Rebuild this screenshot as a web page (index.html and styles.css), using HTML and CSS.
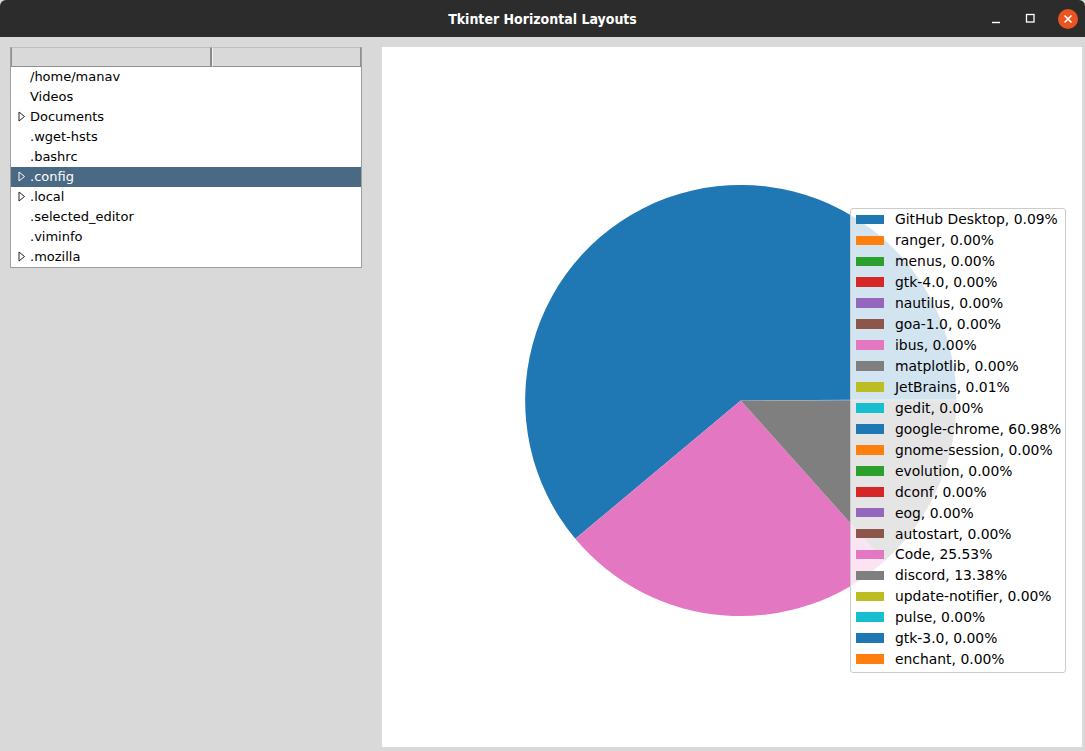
FILE: index.html
```html
<!DOCTYPE html>
<html>
<head>
<meta charset="utf-8">
<link rel="stylesheet" href="styles.css">
</head>
<body>
<div class="window">
  <header class="titlebar">
    <div class="spacer"></div>
    <div class="title">Tkinter Horizontal Layouts</div>
    <div class="controls">
      <span class="ctl ctl-min"><svg width="12" height="12" viewBox="0 0 12 12"><line x1="2" y1="9.5" x2="10" y2="9.5" stroke="#fff" stroke-width="1.4"/></svg></span>
      <span class="ctl ctl-max"><svg width="12" height="12" viewBox="0 0 12 12"><rect x="2.5" y="1.5" width="7.5" height="7.5" fill="none" stroke="#fff" stroke-width="1.3"/></svg></span>
      <span class="ctl ctl-close"><svg width="20" height="20" viewBox="0 0 20 20"><circle cx="10" cy="10" r="10" fill="#e95420"/><path d="M6.5 6.5 L13.5 13.5 M13.5 6.5 L6.5 13.5" stroke="#fff" stroke-width="1.6"/></svg></span>
    </div>
  </header>
  <main class="content">
    <section class="tree">
      <div class="tree-head">
        <div class="head-cell head-c1"></div>
        <div class="head-cell head-c2"></div>
      </div>
      <ul class="tree-rows">
        <li class="row"><span class="arrow"></span><span class="label">/home/manav</span></li>
        <li class="row"><span class="arrow"></span><span class="label">Videos</span></li>
        <li class="row"><span class="arrow"><svg width="8" height="11" viewBox="0 0 8 11"><path d="M1 1 L6.5 5.5 L1 10 Z" fill="none" stroke="#222" stroke-width="1"/></svg></span><span class="label">Documents</span></li>
        <li class="row"><span class="arrow"></span><span class="label">.wget-hsts</span></li>
        <li class="row"><span class="arrow"></span><span class="label">.bashrc</span></li>
        <li class="row selected"><span class="arrow"><svg width="8" height="11" viewBox="0 0 8 11"><path d="M1 1 L6.5 5.5 L1 10 Z" fill="none" stroke="#fff" stroke-width="1"/></svg></span><span class="label">.config</span></li>
        <li class="row"><span class="arrow"><svg width="8" height="11" viewBox="0 0 8 11"><path d="M1 1 L6.5 5.5 L1 10 Z" fill="none" stroke="#222" stroke-width="1"/></svg></span><span class="label">.local</span></li>
        <li class="row"><span class="arrow"></span><span class="label">.selected_editor</span></li>
        <li class="row"><span class="arrow"></span><span class="label">.viminfo</span></li>
        <li class="row"><span class="arrow"><svg width="8" height="11" viewBox="0 0 8 11"><path d="M1 1 L6.5 5.5 L1 10 Z" fill="none" stroke="#222" stroke-width="1"/></svg></span><span class="label">.mozilla</span></li>
      </ul>
    </section>
    <section class="canvas">
      <svg class="pie" width="700" height="700" viewBox="0 0 700 700">
        <path d="M358.75 353.5 L574.35 353.5 A215.6 215.6 0 0 0 574.34 352.28 Z" fill="#1f77b4"/>
        <path d="M358.75 353.5 L574.34 352.28 A215.6 215.6 0 0 0 574.35 352.15 Z" fill="#bcbd22"/>
        <path d="M358.75 353.5 L574.35 352.15 A215.6 215.6 0 1 0 193.30 491.77 Z" fill="#1f77b4"/>
        <path d="M358.75 353.5 L193.30 491.77 A215.6 215.6 0 0 0 502.45 514.23 Z" fill="#e377c2"/>
        <path d="M358.75 353.5 L502.45 514.23 A215.6 215.6 0 0 0 574.35 353.5 Z" fill="#7f7f7f"/>
      </svg>
      <ul class="legend">
        <li><i style="background:#1f77b4"></i>GitHub Desktop, 0.09%</li>
        <li><i style="background:#ff7f0e"></i>ranger, 0.00%</li>
        <li><i style="background:#2ca02c"></i>menus, 0.00%</li>
        <li><i style="background:#d62728"></i>gtk-4.0, 0.00%</li>
        <li><i style="background:#9467bd"></i>nautilus, 0.00%</li>
        <li><i style="background:#8c564b"></i>goa-1.0, 0.00%</li>
        <li><i style="background:#e377c2"></i>ibus, 0.00%</li>
        <li><i style="background:#7f7f7f"></i>matplotlib, 0.00%</li>
        <li><i style="background:#bcbd22"></i>JetBrains, 0.01%</li>
        <li><i style="background:#17becf"></i>gedit, 0.00%</li>
        <li><i style="background:#1f77b4"></i>google-chrome, 60.98%</li>
        <li><i style="background:#ff7f0e"></i>gnome-session, 0.00%</li>
        <li><i style="background:#2ca02c"></i>evolution, 0.00%</li>
        <li><i style="background:#d62728"></i>dconf, 0.00%</li>
        <li><i style="background:#9467bd"></i>eog, 0.00%</li>
        <li><i style="background:#8c564b"></i>autostart, 0.00%</li>
        <li><i style="background:#e377c2"></i>Code, 25.53%</li>
        <li><i style="background:#7f7f7f"></i>discord, 13.38%</li>
        <li><i style="background:#bcbd22"></i>update-notifier, 0.00%</li>
        <li><i style="background:#17becf"></i>pulse, 0.00%</li>
        <li><i style="background:#1f77b4"></i>gtk-3.0, 0.00%</li>
        <li><i style="background:#ff7f0e"></i>enchant, 0.00%</li>
      </ul>
    </section>
  </main>
</div>
</body>
</html>
```

FILE: styles.css
```css
* { box-sizing: border-box; }
html, body { margin: 0; padding: 0; }
body {
  width: 1085px;
  height: 751px;
  overflow: hidden;
  background: #d9d9d9;
  font-family: "DejaVu Sans", sans-serif;
}
.window { width: 1085px; height: 751px; display: flex; flex-direction: column; }

.titlebar {
  height: 37px;
  flex: none;
  background: #2c2c2c;
  display: grid;
  grid-template-columns: 1fr auto 1fr;
  align-items: center;
  border-radius: 6px 6px 0 0;
}
.title {
  color: #ffffff;
  font-family: "DejaVu Sans Condensed", "DejaVu Sans", sans-serif;
  font-weight: bold;
  font-size: 14px;
  letter-spacing: 0;
}
.controls {
  display: flex;
  justify-content: flex-end;
  align-items: center;
  gap: 0;
  padding-right: 7px;
}
.ctl { display: flex; align-items: center; justify-content: center; }
.ctl-min { width: 12px; margin-right: 22px; }
.ctl-max { width: 12px; margin-right: 22px; }
.ctl-close { width: 20px; }

.content {
  flex: 1;
  display: flex;
  align-items: flex-start;
  padding: 10px 0 0 10px;
  gap: 20px;
}

.tree {
  width: 352px;
  background: #ffffff;
  border: 1px solid #9f9f9f;
  border-top: none;
}
.tree-head {
  display: flex;
  height: 20px;
}
.head-cell {
  height: 20px;
  background: #d9d9d9;
  border: 1px solid #8f8f8f;
  border-top-color: #bdbdbd;
}
.head-c1 { width: 201px; border-right: 2px solid #8a8a8a; }
.head-c2 { flex: 1; border-left: 1px solid #f2f2f2; }

.tree-rows { list-style: none; margin: 0; padding: 0; }
.row {
  height: 20px;
  display: flex;
  align-items: center;
  padding-bottom: 2px;
  font-size: 13px;
  color: #000;
}
.row .arrow {
  width: 19px;
  display: flex;
  justify-content: flex-end;
  padding-right: 4px;
  align-items: center;
}
.row .arrow svg { display: block; }
.row.selected { background: #4a6984; color: #ffffff; }

.canvas {
  position: relative;
  width: 700px;
  height: 700px;
  background: #ffffff;
}
.pie { display: block; }

.legend {
  position: absolute;
  left: 468px;
  top: 161px;
  width: 216px;
  height: 465px;
  margin: 0;
  padding: 0 0 0 5px;
  list-style: none;
  background: rgba(255, 255, 255, 0.8);
  border: 1px solid #cccccc;
  border-radius: 3px;
  font-size: 13.9px;
  color: #000;
}
.legend li {
  height: 20.94px;
  display: flex;
  align-items: center;
  white-space: nowrap;
}
.legend i {
  display: block;
  width: 28px;
  height: 9.7px;
  margin-right: 11px;
  flex: none;
}
```
